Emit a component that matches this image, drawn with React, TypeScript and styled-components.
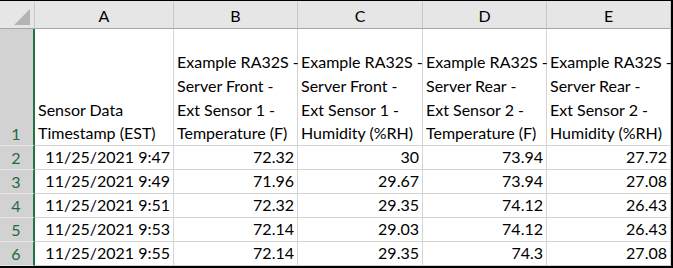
import React from 'react';
import styled, { createGlobalStyle } from 'styled-components';

const GlobalStyle = createGlobalStyle`
  html, body {
    margin: 0;
    padding: 0;
    background: #ffffff;
  }
  body {
    font-family: Lato, "Liberation Sans", sans-serif;
  }
`;

const Frame = styled.div`
  width: 671px;
  height: 265px;
  border-top: 1px solid #000;
  border-right: 2px solid #000;
  border-bottom: 2px solid #000;
  background: #fff;
  overflow: hidden;
`;

const Grid = styled.div`
  display: grid;
  grid-template-columns: 35px 139px 124px 125px 124px 1fr;
  grid-template-rows: 28px 117px repeat(5, 24px);
  font-size: 16px;
  color: #000;
`;

const Corner = styled.div`
  position: relative;
  background: #e6e6e6;
  border-right: 1px solid #c8c8c8;
  border-bottom: 1px solid #a6a6a6;
`;

const SelectAll = styled.div`
  position: absolute;
  right: 4px;
  bottom: 3px;
  width: 0;
  height: 0;
  border-left: 16px solid transparent;
  border-bottom: 16px solid #b4b4b4;
`;

const ColHead = styled.div`
  background: #e6e6e6;
  border-right: 1px solid #c8c8c8;
  border-bottom: 1px solid #a6a6a6;
  display: flex;
  align-items: center;
  justify-content: center;
  padding-top: 2px;
`;

const RowHead = styled.div`
  background: #d2d2d2;
  border-right: 2px solid #217346;
  border-bottom: 1px solid #e4e4e4;
  color: #1f6a3f;
  display: flex;
  align-items: flex-end;
  justify-content: center;
  line-height: 23px;
  padding-right: 1px;
`;

const Cell = styled.div<{ $align?: 'left' | 'right' }>`
  border-right: 1px solid #d4d4d4;
  border-bottom: 1px solid #d4d4d4;
  display: flex;
  flex-direction: column;
  justify-content: flex-end;
  align-items: ${p => (p.$align === 'right' ? 'flex-end' : 'flex-start')};
  padding: 0 3px 0 3px;
  line-height: 23.7px;
  white-space: nowrap;
  min-width: 0;
`;

const headers = [
  ['Sensor Data', 'Timestamp (EST)'],
  ['Example RA32S -', 'Server Front -', 'Ext Sensor 1 -', 'Temperature (F)'],
  ['Example RA32S -', 'Server Front -', 'Ext Sensor 1 -', 'Humidity (%RH)'],
  ['Example RA32S -', 'Server Rear -', 'Ext Sensor 2 -', 'Temperature (F)'],
  ['Example RA32S -', 'Server Rear -', 'Ext Sensor 2 -', 'Humidity (%RH)'],
];

const rows = [
  ['11/25/2021 9:47', '72.32', '30', '73.94', '27.72'],
  ['11/25/2021 9:49', '71.96', '29.67', '73.94', '27.08'],
  ['11/25/2021 9:51', '72.32', '29.35', '74.12', '26.43'],
  ['11/25/2021 9:53', '72.14', '29.03', '74.12', '26.43'],
  ['11/25/2021 9:55', '72.14', '29.35', '74.3', '27.08'],
];

const App: React.FC = () => {
  return (
    <>
      <GlobalStyle />
      <Frame>
        <Grid>
          <Corner>
            <SelectAll />
          </Corner>
          {['A', 'B', 'C', 'D', 'E'].map(l => (
            <ColHead key={l}>{l}</ColHead>
          ))}

          <RowHead>1</RowHead>
          {headers.map((lines, i) => (
            <Cell key={i}>
              {lines.map(t => (
                <span key={t}>{t}</span>
              ))}
            </Cell>
          ))}

          {rows.map((r, i) => (
            <React.Fragment key={i}>
              <RowHead>{i + 2}</RowHead>
              {r.map((v, j) => (
                <Cell key={j} $align="right">
                  {v}
                </Cell>
              ))}
            </React.Fragment>
          ))}
        </Grid>
      </Frame>
    </>
  );
};

export default App;
